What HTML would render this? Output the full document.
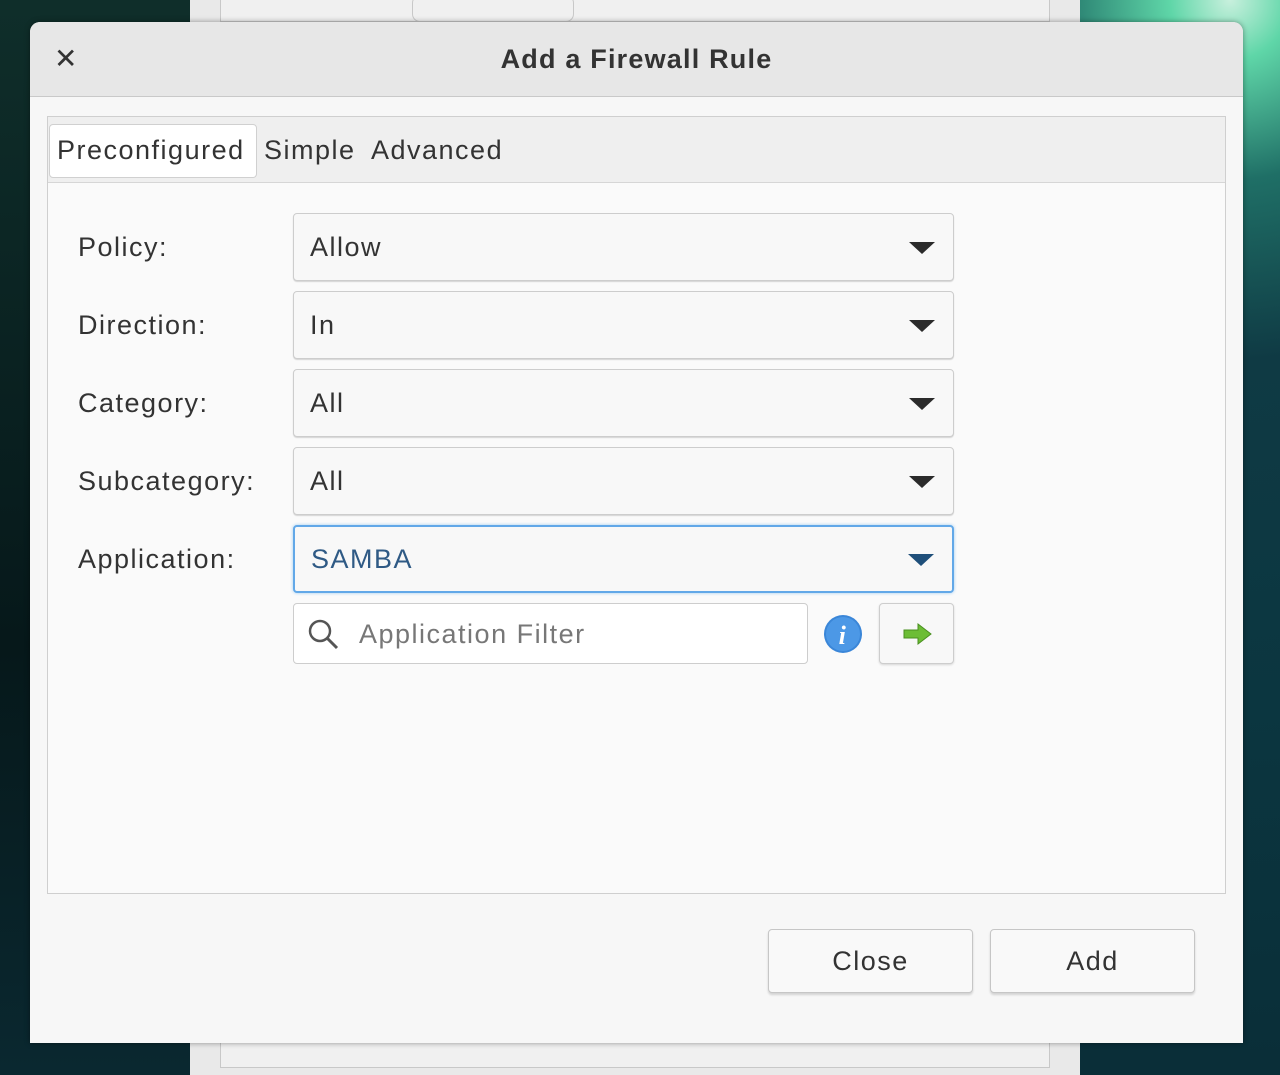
<!DOCTYPE html>
<html><head><style>
*{box-sizing:border-box;margin:0;padding:0}
body{width:1280px;height:1075px;position:relative;overflow:hidden;font-family:"Liberation Sans","DejaVu Sans",sans-serif;background:#0b2a2c;letter-spacing:1.5px}
.bgl{position:absolute;left:0;top:0;width:190px;height:1075px;background:linear-gradient(180deg,#0f2e2a,#06181a 60%,#0a2830)}
.bgr{position:absolute;left:1080px;top:0;width:200px;height:1075px;background:radial-gradient(circle at 150px 0px,#c8f0dd 0,#5fd6a8 60px,#1f6f66 180px,#0f3a44 360px,#0b3640 700px,#0a2e38 1075px)}
.win{position:absolute;left:190px;top:0;width:890px;height:1075px;background:#e9e9e9}
.wl{position:absolute;border:1px solid #c8c8c8;background:#f0f0f0}
.dlg{position:absolute;left:30px;top:22px;width:1213px;height:1021px;background:#f7f7f7;border-radius:10px 10px 0 0;overflow:hidden;box-shadow:0 0 6px rgba(0,0,0,.4)}
.hdr{position:absolute;left:0;top:0;width:100%;height:75px;background:#e7e7e7;border-bottom:1px solid #c9c9c9}
.title{position:absolute;left:0;right:0;top:22px;text-align:center;font-weight:bold;font-size:27px;color:#333;letter-spacing:1.2px}
.x{position:absolute;left:24px;top:20px;font-size:28px;font-weight:bold;color:#333}
.nb{position:absolute;left:17px;top:94px;width:1179px;height:778px;border:1px solid #cfcfcf;background:#fafafa}
.tabs{position:absolute;left:0;top:0;width:100%;height:66px;background:#efefef;border-bottom:1px solid #d6d6d6}
.tab{position:absolute;top:20px;font-size:27px;color:#333;line-height:1}
.act{position:absolute;left:1px;top:7px;width:208px;height:54px;background:#fff;border:1px solid #d0d0d0;border-radius:4px}
.lbl{position:absolute;left:48px;font-size:27px;color:#333}
.cb{position:absolute;left:263px;width:661px;height:68px;background:#f8f8f8;border:1px solid #cdcdcd;border-radius:4px;box-shadow:0 1px 1px rgba(0,0,0,.15)}
.cb span{position:absolute;left:16px;top:18px;font-size:27px;color:#333}
.cb i{position:absolute;right:18px;top:28px;width:0;height:0;border-left:13px solid transparent;border-right:13px solid transparent;border-top:12px solid #2b2b2b}
.btn{position:absolute;top:907px;width:205px;height:64px;background:#f9f9f9;border:1px solid #c6c6c6;border-radius:4px;box-shadow:0 2px 2px rgba(0,0,0,.15);text-align:center;font-size:27px;line-height:62px;color:#333}
</style></head><body>
<div class="bgl"></div><div class="bgr"></div>
<div class="win">
<div class="wl" style="left:30px;top:-5px;width:830px;height:27px"></div>
<div class="wl" style="left:222px;top:-5px;width:162px;height:27px;border-radius:8px"></div>
<div class="wl" style="left:30px;top:1040px;width:830px;height:28px"></div>
</div>
<div class="dlg">
<div class="hdr"><div class="x">✕</div><div class="title">Add a Firewall Rule</div></div>
<div class="nb">
<div class="tabs"><div class="act"></div>
<div class="tab" style="left:9px">Preconfigured</div>
<div class="tab" style="left:216px">Simple</div>
<div class="tab" style="left:323px">Advanced</div></div>
</div>
<div class="lbl" style="top:210px">Policy:</div>
<div class="lbl" style="top:288px">Direction:</div>
<div class="lbl" style="top:366px">Category:</div>
<div class="lbl" style="top:444px">Subcategory:</div>
<div class="lbl" style="top:522px">Application:</div>
<div class="cb" style="top:191px"><span>Allow</span><i></i></div>
<div class="cb" style="top:269px"><span>In</span><i></i></div>
<div class="cb" style="top:347px"><span>All</span><i></i></div>
<div class="cb" style="top:425px"><span>All</span><i></i></div>
<div class="cb" style="top:503px;border:2px solid #62a8e8;box-shadow:0 0 3px #9ccbf2"><span style="color:#2f5a85;top:17px">SAMBA</span><i style="border-top-color:#1f4f7a;top:27px"></i></div>
<div style="position:absolute;left:263px;top:581px;width:515px;height:61px;background:#fff;border:1px solid #cdcdcd;border-radius:4px">
<svg style="position:absolute;left:12px;top:13px" width="36" height="36" viewBox="0 0 36 36"><circle cx="14" cy="14" r="10" fill="none" stroke="#555" stroke-width="2.5"/><line x1="21" y1="21" x2="31" y2="31" stroke="#555" stroke-width="3"/></svg>
<span style="position:absolute;left:65px;top:15px;font-size:27px;color:#777">Application Filter</span></div>
<svg style="position:absolute;left:793px;top:592px" width="40" height="40" viewBox="0 0 40 40"><circle cx="20" cy="20" r="19" fill="#3a86d8"/><circle cx="20" cy="20" r="17" fill="#4c98e6"/><text x="20" y="30" text-anchor="middle" font-family="Liberation Serif" font-style="italic" font-weight="bold" font-size="26" fill="#fff">i</text></svg>
<div style="position:absolute;left:849px;top:581px;width:75px;height:61px;background:#f8f8f8;border:1px solid #cdcdcd;border-radius:4px;box-shadow:0 1px 2px rgba(0,0,0,.15)">
<svg style="position:absolute;left:22px;top:18px" width="32" height="24" viewBox="0 0 32 24"><path d="M2 8h14V2l13 10-13 10v-6H2z" fill="#6cbd35" stroke="#4a9020" stroke-width="1"/></svg></div>
<div class="btn" style="left:738px">Close</div>
<div class="btn" style="left:960px">Add</div>
</div>
</body></html>
